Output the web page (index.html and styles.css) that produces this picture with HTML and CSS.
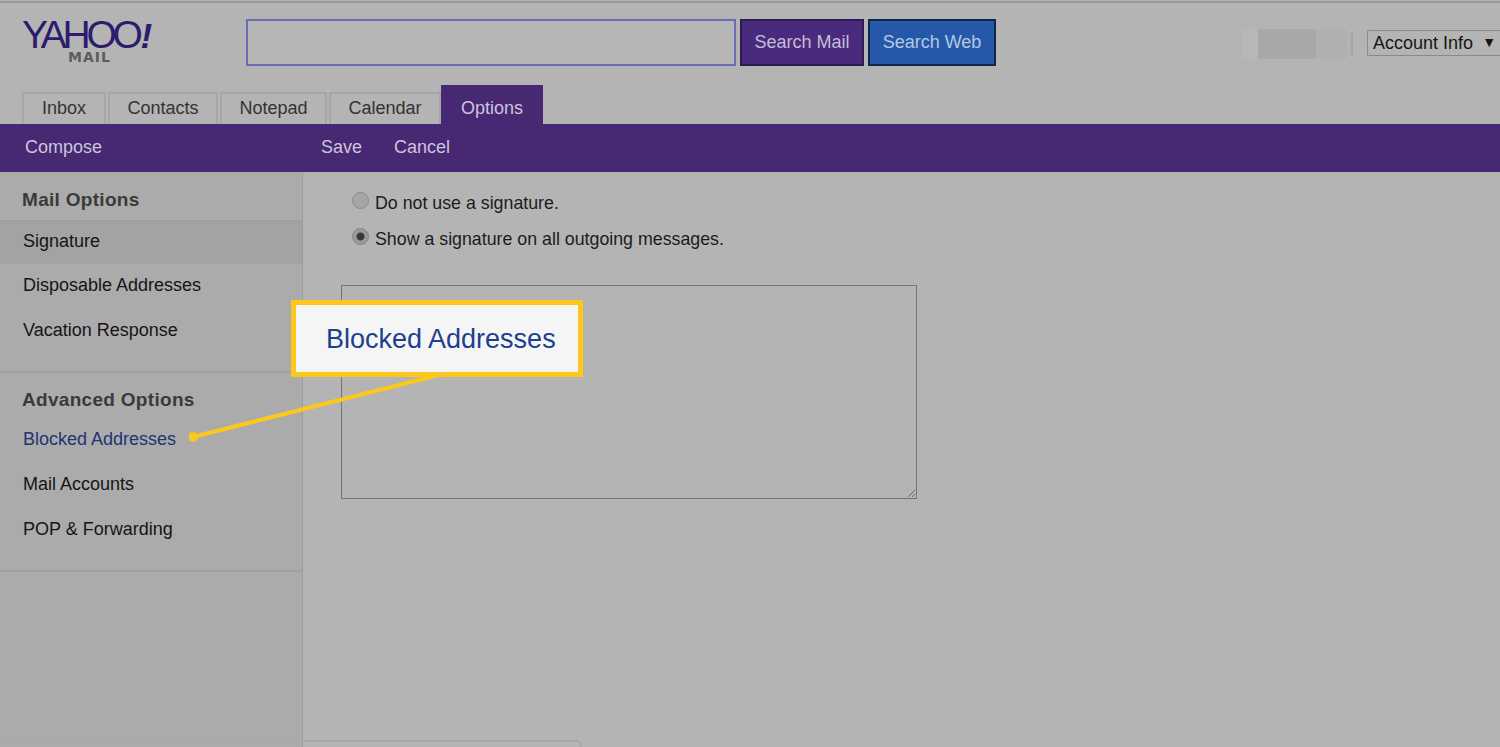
FILE: index.html
```html
<!DOCTYPE html>
<html lang="en">
<head>
<meta charset="utf-8">
<title>Yahoo Mail Options</title>
<link rel="stylesheet" href="styles.css">
</head>
<body>
<div class="page">
  <header class="header">
    <div class="topbar">
      <div class="logo">
        <div class="logo-word">YAHOO<span class="logo-bang">!</span></div>
        <div class="logo-sub">MAIL</div>
      </div>
      <div class="search-box"></div>
      <div class="btn btn-mail">Search Mail</div>
      <div class="btn btn-web">Search Web</div>
      <div class="account">
        <div class="blur"><span class="blur-a"></span><span class="blur-b"></span><span class="blur-c"></span></div>
        <div class="acct-sep"></div>
        <div class="acct-select"><span>Account Info</span><span class="caret">▼</span></div>
      </div>
    </div>
    <nav class="tabs">
      <div class="tab tab-inbox">Inbox</div>
      <div class="tab tab-contacts">Contacts</div>
      <div class="tab tab-notepad">Notepad</div>
      <div class="tab tab-calendar">Calendar</div>
      <div class="tab tab-active">Options</div>
    </nav>
  </header>
  <div class="toolbar">
    <div class="tool-compose">Compose</div>
    <div class="tool-actions"><span>Save</span><span>Cancel</span></div>
  </div>
  <main class="main">
    <aside class="sidebar">
      <section class="side-group group-mail">
        <h2 class="side-title">Mail Options</h2>
        <div class="side-item side-selected">Signature</div>
        <div class="side-item">Disposable Addresses</div>
        <div class="side-item">Vacation Response</div>
      </section>
      <section class="side-group group-adv">
        <h2 class="side-title title-adv">Advanced Options</h2>
        <div class="side-item side-link">Blocked Addresses</div>
        <div class="side-item">Mail Accounts</div>
        <div class="side-item">POP &amp; Forwarding</div>
      </section>
    </aside>
    <section class="content">
      <div class="radio-row"><span class="radio"></span><span>Do not use a signature.</span></div>
      <div class="radio-row"><span class="radio radio-on"></span><span>Show a signature on all outgoing messages.</span></div>
      <div class="textarea">
        <svg class="grip" width="9" height="9" viewBox="0 0 9 9"><path d="M1 8 8 1M5 8 8 5" stroke="#6e6e6e" stroke-width="1" fill="none"/></svg>
      </div>
    </section>
  </main>
  <svg class="pointer" width="260" height="80" viewBox="0 0 260 80">
    <path d="M246 6 4 67" stroke="#fcc81e" stroke-width="4" fill="none"/>
    <circle cx="4" cy="67" r="5" fill="#fcc81e"/>
  </svg>
  <div class="callout"><span class="callout-text">Blocked Addresses</span></div>
  <div class="bottom-edge"></div>
</div>
</body>
</html>
```
FILE: styles.css
```css
* { box-sizing: border-box; }
html, body { margin: 0; height: 100%; overflow: hidden; }
body { background: #b4b4b4; font-family: "Liberation Sans", Arial, sans-serif; color: #1c1c1c; }
.page { position: relative; width: 1500px; height: 747px; display: flex; flex-direction: column; overflow: hidden; }

.header { height: 123px; border-top: 2px solid #989898; margin-top: 1px; display: flex; flex-direction: column; }
.topbar { height: 82px; display: flex; align-items: flex-start; padding-left: 22px; position: relative; }
.logo { width: 224px; padding-top: 12px; }
.logo-word { font-size: 39px; line-height: 40px; letter-spacing: -4.3px; color: #2d1c6e; height: 40px; white-space: nowrap; }
.logo-bang { font-size: 35px; font-style: italic; font-weight: 700; letter-spacing: 0; margin-left: 2px; }
.logo-sub { font-family: "DejaVu Sans", sans-serif; font-size: 14px; line-height: 14px; font-weight: 700; color: #5c5c5c; margin-left: 46px; margin-top: -5px; letter-spacing: 1px; }
.search-box { width: 490px; height: 47px; margin-top: 16px; border: 2px solid #6a6db4; background: #b6b6b6; }
.btn { height: 47px; margin-top: 16px; display: flex; align-items: center; justify-content: center; font-size: 18px; border: 2px solid; }
.btn-mail { width: 124px; margin-left: 4px; background: #4a2a7c; border-color: #2e1a52; color: #c6bcd6; }
.btn-web { width: 128px; margin-left: 4px; background: #2558a8; border-color: #10264e; color: #b4c8e2; }
.account { margin-left: auto; display: flex; align-items: center; margin-top: 26px; height: 30px; }
.blur { display: flex; width: 105px; height: 30px; background: #b9b9b9; }
.blur-a { width: 16px; background: #b7b7b7; }
.blur-b { width: 58px; background: #a8a8a8; }
.blur-c { width: 31px; background: #b0b0b0; }
.acct-sep { width: 2px; height: 22px; background: #a4a4a4; margin-left: 4px; margin-right: 14px; }
.acct-select { width: 133px; height: 26px; margin-top: -2px; border: 1px solid #8a8a8a; border-right: 0; border-radius: 2px 0 0 2px; display: flex; align-items: center; justify-content: space-between; padding: 0 4px 0 5px; font-size: 18px; color: #161616; }
.caret { font-size: 14px; margin-top: -2px; }

.tabs { flex: 1; display: flex; align-items: flex-end; padding-left: 22px; gap: 2px; }
.tab { height: 32px; display: flex; align-items: center; justify-content: center; font-size: 18px; color: #333; background: #b4b4b4; border: 2px solid #a6a6a6; border-bottom: 0; padding-bottom: 1px; }
.tab-inbox { width: 84px; }
.tab-contacts { width: 110px; }
.tab-notepad { width: 107px; }
.tab-calendar { width: 112px; }
.tab-active { width: 102px; height: 39px; margin-left: -2px; background: #462873; border: 0; color: #cdc5dc; padding-top: 8px; padding-bottom: 0; }

.toolbar { height: 48px; background: #462873; color: #cdc5dc; font-size: 18px; display: flex; align-items: center; padding-left: 25px; }
.tool-compose { width: 296px; margin-top: -2px; }
.tool-actions { display: flex; gap: 32px; margin-top: -2px; }

.main { flex: 1; display: flex; min-height: 0; }
.sidebar { width: 303px; background: #ababab; border-right: 1px solid #9c9c9c; }
.side-group { border-bottom: 2px solid #a0a0a0; }
.group-mail { height: 201px; }
.group-adv { height: 199px; }
.side-title { margin: 0; height: 50px; padding: 17px 0 0 22px; font-size: 19px; line-height: 22px; font-weight: 700; color: #3a3a3a; letter-spacing: .3px; border-bottom: 2px solid #a0a0a0; }
.title-adv { border-bottom: 0; height: 45px; padding-top: 16px; }
.side-item { height: 45px; padding-left: 23px; padding-bottom: 2px; display: flex; align-items: center; font-size: 18px; color: #151515; }
.side-selected { height: 42px; background: #a3a3a3; padding-bottom: 3px; }
.side-link { color: #1e3474; }

.content { flex: 1; padding: 20px 0 0 36px; font-size: 17.8px; color: #1c1c1c; }
.radio-row { height: 36px; display: flex; align-items: flex-start; gap: 6px; padding-left: 13px; line-height: 22px; }
.radio { width: 17px; height: 17px; margin-top: 0; border-radius: 50%; border: 1px solid #8c8c8c; background: #a6a6a6; flex: none; }
.radio-on { background: radial-gradient(circle, #3a3a3a 0 3.5px, #9a9a9a 4.5px 100%); border-color: #848484; }
.textarea { width: 576px; height: 214px; margin-left: 2px; margin-top: 21px; border: 1px solid #747474; position: relative; }
.grip { position: absolute; right: 0; bottom: 0; }

.callout { position: absolute; left: 291px; top: 300px; width: 292px; height: 77px; background: #f5f5f5; border: 5px solid #fcc81e; color: #1e3f8e; font-size: 27px; display: flex; align-items: center; padding-left: 30px; }
.callout-text { margin-top: 2px; }
.pointer { position: absolute; left: 189px; top: 370px; }
.bottom-edge { position: absolute; left: 0; top: 740px; width: 582px; height: 10px; border: 2px solid #a8a8a8; border-radius: 0 6px 0 0; border-left: 0; }
```
